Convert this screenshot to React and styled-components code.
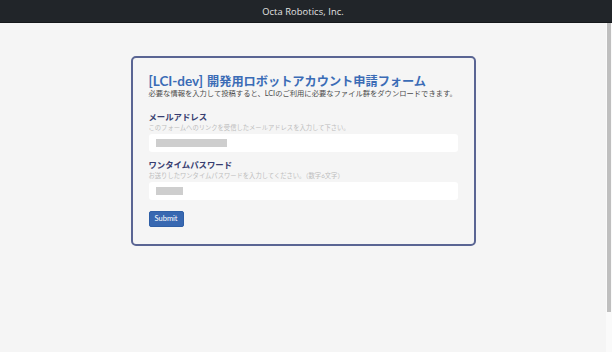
import React from "react";
import styled, { createGlobalStyle } from "styled-components";

const GlobalStyle = createGlobalStyle`
  html, body {
    margin: 0;
    padding: 0;
    height: 100%;
    background: #f5f5f5;
    font-family: "Lato", "Noto Sans CJK JP", sans-serif;
  }
  * { box-sizing: border-box; }
`;

const Page = styled.div`
  height: 100vh;
  display: flex;
  flex-direction: column;
  overflow: hidden;
`;

const Header = styled.header`
  flex: none;
  height: 23px;
  padding-right: 6px;
  background: #212529;
  border-bottom: 1px solid #15181b;
  display: flex;
  align-items: center;
  justify-content: center;
  color: #e4e4e4;
  font-family: "Open Sans", sans-serif;
  font-size: 9.3px;
  letter-spacing: 0.1px;
`;

const Body = styled.div`
  flex: 1;
  min-height: 0;
  display: flex;
`;

const Scroller = styled.div`
  flex: 1;
  min-width: 0;
  overflow-y: auto;
  scrollbar-width: none;
  &::-webkit-scrollbar { display: none; }
`;

const ScrollRail = styled.div`
  flex: none;
  width: 6px;
  padding: 0 1px;
  background: #fafafa;
`;

const ScrollThumb = styled.div`
  height: ${(p) => p.$pct}%;
  background: #bfbfbf;
`;

const Main = styled.main`
  min-height: 100vh;
  padding-top: 33px;
  display: flex;
  justify-content: center;
  align-items: flex-start;
`;

const Card = styled.form`
  width: 345px;
  border: 2px solid #5a6593;
  border-radius: 5px;
  padding: 16px 16px 17px;
  display: flex;
  flex-direction: column;
  align-items: flex-start;
`;

const Title = styled.h1`
  margin: 0;
  font-size: 12.2px;
  line-height: 15px;
  font-weight: 700;
  color: #3b6cb6;
  white-space: nowrap;
`;

const TitleTag = styled.span`
  font-size: 13.5px;
  margin-right: 4px;
`;

const Lead = styled.p`
  margin: 0;
  font-size: 7.3px;
  line-height: 10px;
  color: #4a4a4a;
  white-space: nowrap;
`;

const Field = styled.div`
  align-self: stretch;
  margin-top: ${(p) => p.$gap}px;
  display: flex;
  flex-direction: column;
`;

const Label = styled.label`
  font-size: 8.4px;
  line-height: 12px;
  font-weight: 700;
  color: #373d70;
`;

const Help = styled.span`
  font-size: 6.3px;
  line-height: 9px;
  color: #bdbdbd;
  white-space: nowrap;
`;

const InputShell = styled.div`
  margin-top: 2px;
  height: 18px;
  background: #ffffff;
  border-radius: 3px;
  display: flex;
  align-items: center;
  padding-left: 7px;
`;

const Redacted = styled.span`
  display: block;
  height: 8px;
  width: ${(p) => p.$w}px;
  background: #cecece;
`;

const SubmitButton = styled.button`
  margin-top: 11px;
  height: 16px;
  padding: 0 5px;
  border: 1px solid #2f5fa6;
  border-radius: 2px;
  background: #3868b1;
  color: #ffffff;
  font-family: "Lato", sans-serif;
  font-size: 7.5px;
  line-height: 14px;
`;

export default function App() {
  return (
    <Page>
      <GlobalStyle />
      <Header>Octa Robotics, Inc.</Header>
      <Body>
        <Scroller>
          <Main>
            <Card onSubmit={(e) => e.preventDefault()}>
              <Title>
                <TitleTag>[LCI-dev]</TitleTag>開発用ロボットアカウント申請フォーム
              </Title>
              <Lead>
                必要な情報を入力して投稿すると、LCIのご利用に必要なファイル群をダウンロードできます。
              </Lead>
              <Field $gap={12}>
                <Label>メールアドレス</Label>
                <Help>このフォームへのリンクを受信したメールアドレスを入力して下さい。</Help>
                <InputShell>
                  <Redacted $w={71} />
                </InputShell>
              </Field>
              <Field $gap={7}>
                <Label>ワンタイムパスワード</Label>
                <Help>お送りしたワンタイムパスワードを入力してください。（数字6文字）</Help>
                <InputShell>
                  <Redacted $w={27} />
                </InputShell>
              </Field>
              <SubmitButton type="submit">Submit</SubmitButton>
            </Card>
          </Main>
        </Scroller>
        <ScrollRail>
          <ScrollThumb $pct={87.8} />
        </ScrollRail>
      </Body>
    </Page>
  );
}
